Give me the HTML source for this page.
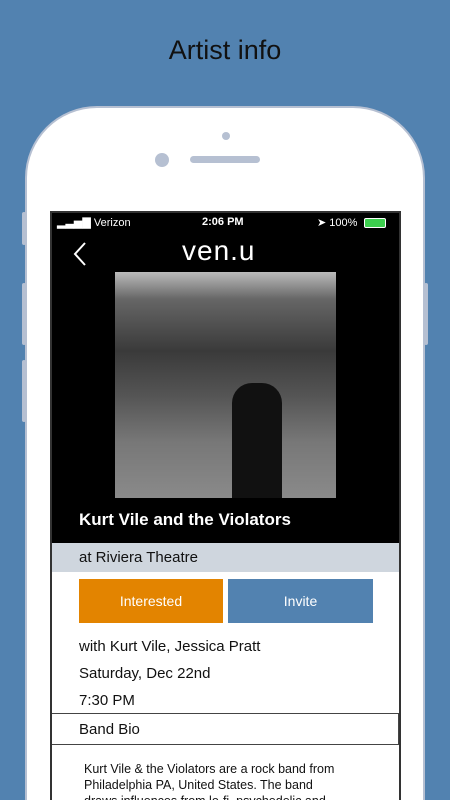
<!DOCTYPE html>
<html style="width:450px;height:800px;overflow:hidden"><head><style>
*{margin:0;padding:0;box-sizing:border-box}
body{width:450px;height:800px;background:#5282b0;position:relative;overflow:hidden;font-family:"Liberation Sans",sans-serif}
.t{position:absolute;top:35px;width:100%;text-align:center;font-size:27px;color:#111}
.phone{position:absolute;left:25px;top:106px;width:400px;height:694px;background:#fff;border:2px solid #b6c0d2;border-bottom:none;border-radius:72px 72px 0 0}
.btn{position:absolute;background:#b6c0d2;width:4px;border-radius:2px}
.scr{position:absolute;left:50px;top:211px;width:351px;height:589px;background:#fff;border:2px solid #333;border-bottom:none;overflow:hidden}
.abs{position:absolute}
</style></head><body>
<div class="t">Artist info</div>
<div class="btn" style="left:22px;top:212px;height:33px"></div>
<div class="btn" style="left:22px;top:283px;height:62px"></div>
<div class="btn" style="left:22px;top:360px;height:62px"></div>
<div class="btn" style="left:424px;top:283px;height:62px"></div>
<div class="phone"></div>
<div class="abs" style="left:222px;top:132px;width:8px;height:8px;border-radius:50%;background:#b6c0d2"></div>
<div class="abs" style="left:155px;top:153px;width:14px;height:14px;border-radius:50%;background:#b6c0d2"></div>
<div class="abs" style="left:190px;top:156px;width:70px;height:7px;border-radius:4px;background:#b6c0d2"></div>
<div class="scr">
 <div class="abs" style="left:0;top:0;width:347px;height:330px;background:#000"></div>
 <div class="abs" style="left:5px;top:3px;color:#fff;font-size:11px">▂▃▅▇ Verizon</div>
 <div class="abs" style="left:150px;top:3px;color:#fff;font-size:11px;font-weight:bold">2:06 PM</div>
 <div class="abs" style="left:265px;top:3px;color:#fff;font-size:11px">➤ 100%</div>
 <div class="abs" style="left:312px;top:5px;width:22px;height:10px;background:#3ccf4e;border:1px solid #fff;border-radius:2px"></div>
 <svg class="abs" style="left:20px;top:28px" width="16" height="26"><path d="M13 2 L3 13 L13 24" stroke="#fff" stroke-width="2" fill="none"/></svg>
 <div class="abs" style="left:130px;top:22px;color:#fff;font-size:28px;font-weight:300;letter-spacing:1px">ven.u</div>
 <div class="abs" style="left:63px;top:59px;width:221px;height:226px;background:linear-gradient(180deg,#bbb 0%,#666 12%,#3a3a3a 35%,#555 55%,#777 75%,#8a8a8a 100%)"></div>
 <div class="abs" style="left:180px;top:170px;width:50px;height:115px;background:#111;border-radius:20px 20px 0 0"></div>
 <div class="abs" style="left:27px;top:297px;color:#fff;font-size:17px;font-weight:bold">Kurt Vile and the Violators</div>
 <div class="abs" style="left:0;top:330px;width:347px;height:29px;background:#cfd6de"></div>
 <div class="abs" style="left:27px;top:336px;font-size:15px;color:#111">at Riviera Theatre</div>
 <div class="abs" style="left:27px;top:366px;width:144px;height:44px;background:#e38400;color:#fff;font-size:14px;text-align:center;line-height:44px">Interested</div>
 <div class="abs" style="left:176px;top:366px;width:145px;height:44px;background:#5282b0;color:#fff;font-size:14px;text-align:center;line-height:44px">Invite</div>
 <div class="abs" style="left:27px;top:420px;font-size:15px;color:#111;line-height:27px">with Kurt Vile, Jessica Pratt<br>Saturday, Dec 22nd<br>7:30 PM</div>
 <div class="abs" style="left:0;top:500px;width:347px;height:32px;border-top:1px solid #444;border-bottom:1px solid #444;border-right:1px solid #444"></div>
 <div class="abs" style="left:27px;top:508px;font-size:15px;color:#111">Band Bio</div>
 <div class="abs" style="left:32px;top:548px;width:262px;font-size:12.5px;color:#111;line-height:16px">Kurt Vile &amp; the Violators are a rock band from Philadelphia PA, United States. The band draws influences from lo-fi, psychedelic and</div>
</div>
</body></html>
